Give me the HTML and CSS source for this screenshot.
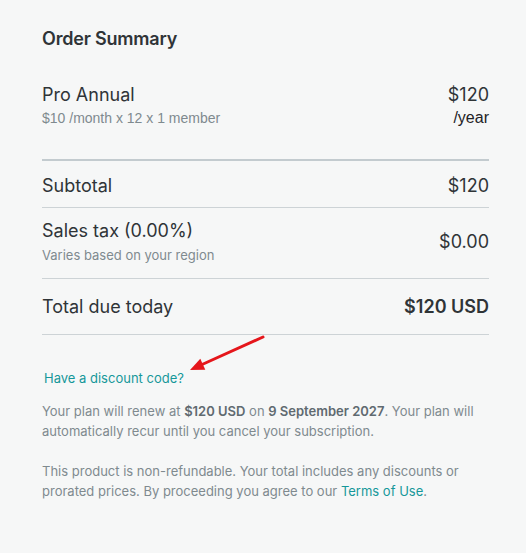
FILE: index.html
```html
<!DOCTYPE html>
<html lang="en">
<head>
<meta charset="utf-8">
<title>Order Summary</title>
<link rel="stylesheet" href="styles.css">
</head>
<body>
<main class="summary">
  <h2 class="title">Order Summary</h2>

  <div class="row row-plan">
    <div class="col">
      <div class="label">Pro Annual</div>
      <div class="sub sub-arial">$10 /month x 12 x 1 member</div>
    </div>
    <div class="col col-right">
      <div class="amount">$120</div>
      <div class="per">/year</div>
    </div>
  </div>

  <div class="row row-line row-subtotal">
    <div class="label">Subtotal</div>
    <div class="amount">$120</div>
  </div>

  <div class="row row-line row-tax">
    <div class="col">
      <div class="label">Sales tax (0.00%)</div>
      <div class="sub">Varies based on your region</div>
    </div>
    <div class="amount">$0.00</div>
  </div>

  <div class="row row-line row-total">
    <div class="label">Total due today</div>
    <div class="amount strong">$120 USD</div>
  </div>

  <div class="discount-wrap">
    <a class="discount" href="#">Have a discount code?</a>
    <svg class="arrow" width="90" height="45" viewBox="0 0 90 45">
      <line x1="81" y1="4" x2="19" y2="32" stroke="#e5161b" stroke-width="3" stroke-linecap="round"/>
      <polygon points="8,37 23.3,36.7 18.3,25.7" fill="#e5161b"/>
    </svg>
  </div>

  <p class="note">Your plan will renew at <b>$120 USD</b> on <b>9 September 2027</b>. Your plan will automatically recur until you cancel your subscription.</p>
  <p class="note">This product is non-refundable. Your total includes any discounts or prorated prices. By proceeding you agree to our <a class="link" href="#">Terms of Use</a>.</p>
</main>
</body>
</html>
```
FILE: styles.css
```css
html, body {
  margin: 0;
  padding: 0;
  background: #f6f7f7;
}
body {
  font-family: "Inter", "Noto Sans", sans-serif;
  color: #2f3437;
}
.summary {
  padding: 27px 37px 0 42px;
}
.title {
  margin: 0 0 32px 0;
  font-size: 18px;
  font-weight: 600;
  line-height: 24px;
  letter-spacing: -0.2px;
  color: #2f3437;
}
.row {
  display: flex;
  justify-content: space-between;
}
.col {
  display: flex;
  flex-direction: column;
}
.col-right {
  align-items: flex-end;
}
.label {
  font-size: 18px;
  line-height: 24px;
  color: #2f3437;
}
.amount {
  font-size: 18px;
  line-height: 24px;
  color: #2f3437;
}
.amount.strong {
  font-weight: 600;
}
.sub {
  font-size: 13px;
  line-height: 18px;
  color: #7f8a8f;
  margin-top: 3px;
}
.sub-arial {
  font-family: "Liberation Sans", Arial, sans-serif;
  font-size: 14px;
  margin-top: 2px;
}
.per {
  font-family: "Liberation Sans", Arial, sans-serif;
  font-size: 16px;
  line-height: 18px;
  color: #1e2326;
  margin-top: 2px;
}
.row-plan {
  padding-bottom: 32px;
  border-bottom: 2px solid #c3cbcf;
}
.row-line {
  align-items: center;
  border-bottom: 1px solid #cdd3d6;
}
.row-subtotal {
  padding: 13px 0 9px;
}
.row-tax {
  padding: 11px 0 14px;
}
.row-total {
  padding: 16px 0 15px;
}
.discount-wrap {
  position: relative;
  margin-top: 33px;
  line-height: 18px;
}
.discount {
  font-size: 13px;
  color: #16979a;
  text-decoration: none;
  margin-left: 2px;
}
.arrow {
  position: absolute;
  left: 140px;
  top: -35px;
}
.note {
  margin: 14px 0 0;
  font-size: 13px;
  line-height: 20px;
  color: #7f8a8f;
}
.note + .note {
  margin-top: 20px;
}
.note b {
  font-weight: 600;
  color: #5f6a70;
}
.link {
  color: #16979a;
  text-decoration: none;
}
```
